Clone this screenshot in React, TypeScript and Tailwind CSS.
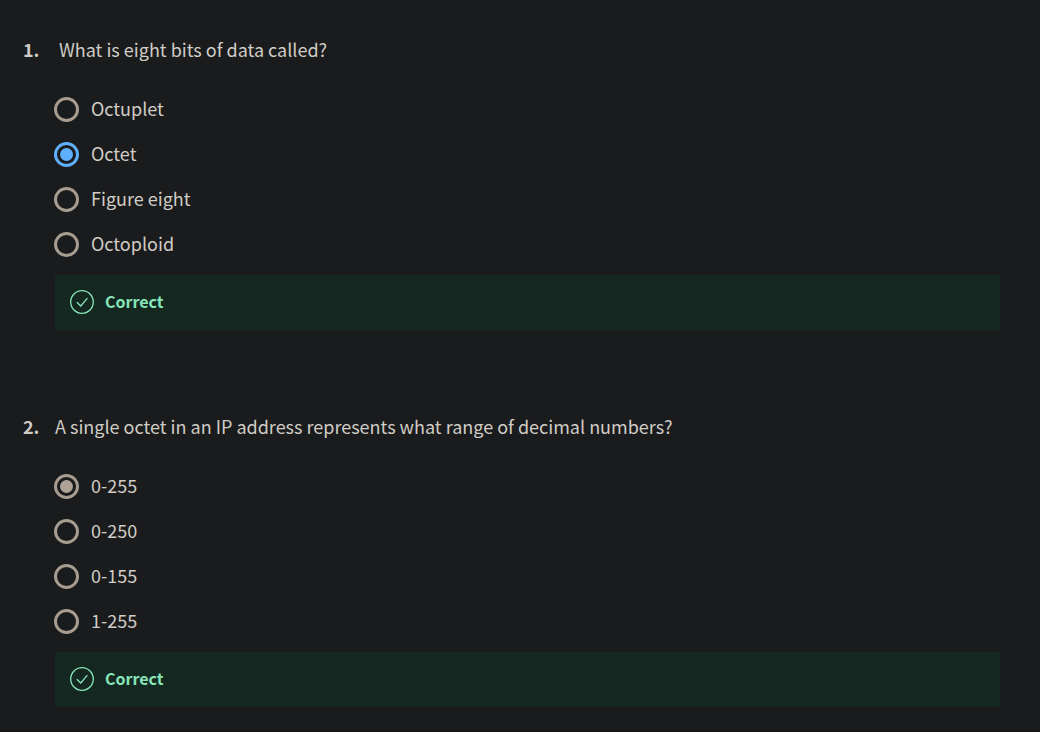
import { useState } from "react";

type Question = {
  id: string;
  number: string;
  prompt: string;
  options: string[];
  answer: string;
  indented?: boolean;
  locked?: boolean;
};

const questions: Question[] = [
  {
    id: "q1",
    number: "1.",
    prompt: "What is eight bits of data called?",
    options: ["Octuplet", "Octet", "Figure eight", "Octoploid"],
    answer: "Octet",
    indented: true,
  },
  {
    id: "q2",
    number: "2.",
    prompt: "A single octet in an IP address represents what range of decimal numbers?",
    options: ["0-255", "0-250", "0-155", "1-255"],
    answer: "0-255",
    locked: true,
  },
];

function CheckCircle() {
  return (
    <svg className="size-6 shrink-0" viewBox="0 0 24 24" fill="none" stroke="currentColor" aria-hidden="true">
      <circle cx="12" cy="12" r="11.3" strokeWidth="1.3" />
      <path d="M6.8 12.2L10.8 16L17.4 8.2" strokeWidth="1.3" />
    </svg>
  );
}

function QuestionBlock({ question }: { question: Question }) {
  const [selected, setSelected] = useState(question.answer);
  const dot = question.locked
    ? "checked:bg-[#aea296]"
    : "checked:border-[#5eb0ff] checked:bg-[#5eb0ff]";

  return (
    <fieldset className="min-w-0">
      <legend className="flex w-full items-start leading-7">
        <span className="w-8 shrink-0 font-bold">{question.number}</span>
        <span className={question.indented ? "pl-1" : ""}>{question.prompt}</span>
      </legend>
      <div className="flex flex-col gap-5 pt-[34px] pl-[31px]">
        {question.options.map((option) => (
          <label key={option} className="flex h-[25px] items-start gap-3 self-start leading-[23px]">
            <input
              type="radio"
              name={question.id}
              value={option}
              checked={selected === option}
              onChange={() => setSelected(option)}
              className={`size-[25px] shrink-0 appearance-none rounded-full border-3 border-[#a79c90] bg-clip-content p-[3px] ${dot}`}
            />
            <span>{option}</span>
          </label>
        ))}
      </div>
      {selected === question.answer && (
        <div role="status" className="mt-[18px] ml-8 flex h-[55px] items-center gap-[11px] bg-[#152721] px-[15px] pb-px text-[#87e5b9]">
          <CheckCircle />
          <span className="pb-[3px] text-base font-bold">Correct</span>
        </div>
      )}
    </fieldset>
  );
}

export default function App() {
  return (
    <main className="flex min-h-screen flex-col gap-[82px] border-b-2 border-[#161517] bg-[#1a1b1c] pt-[35px] pr-10 pb-5 pl-[23px] font-['Noto_Sans_CJK_SC','Noto_Sans',sans-serif] text-lg text-[#d0ccc6]">
      {questions.map((question) => (
        <QuestionBlock key={question.id} question={question} />
      ))}
    </main>
  );
}
